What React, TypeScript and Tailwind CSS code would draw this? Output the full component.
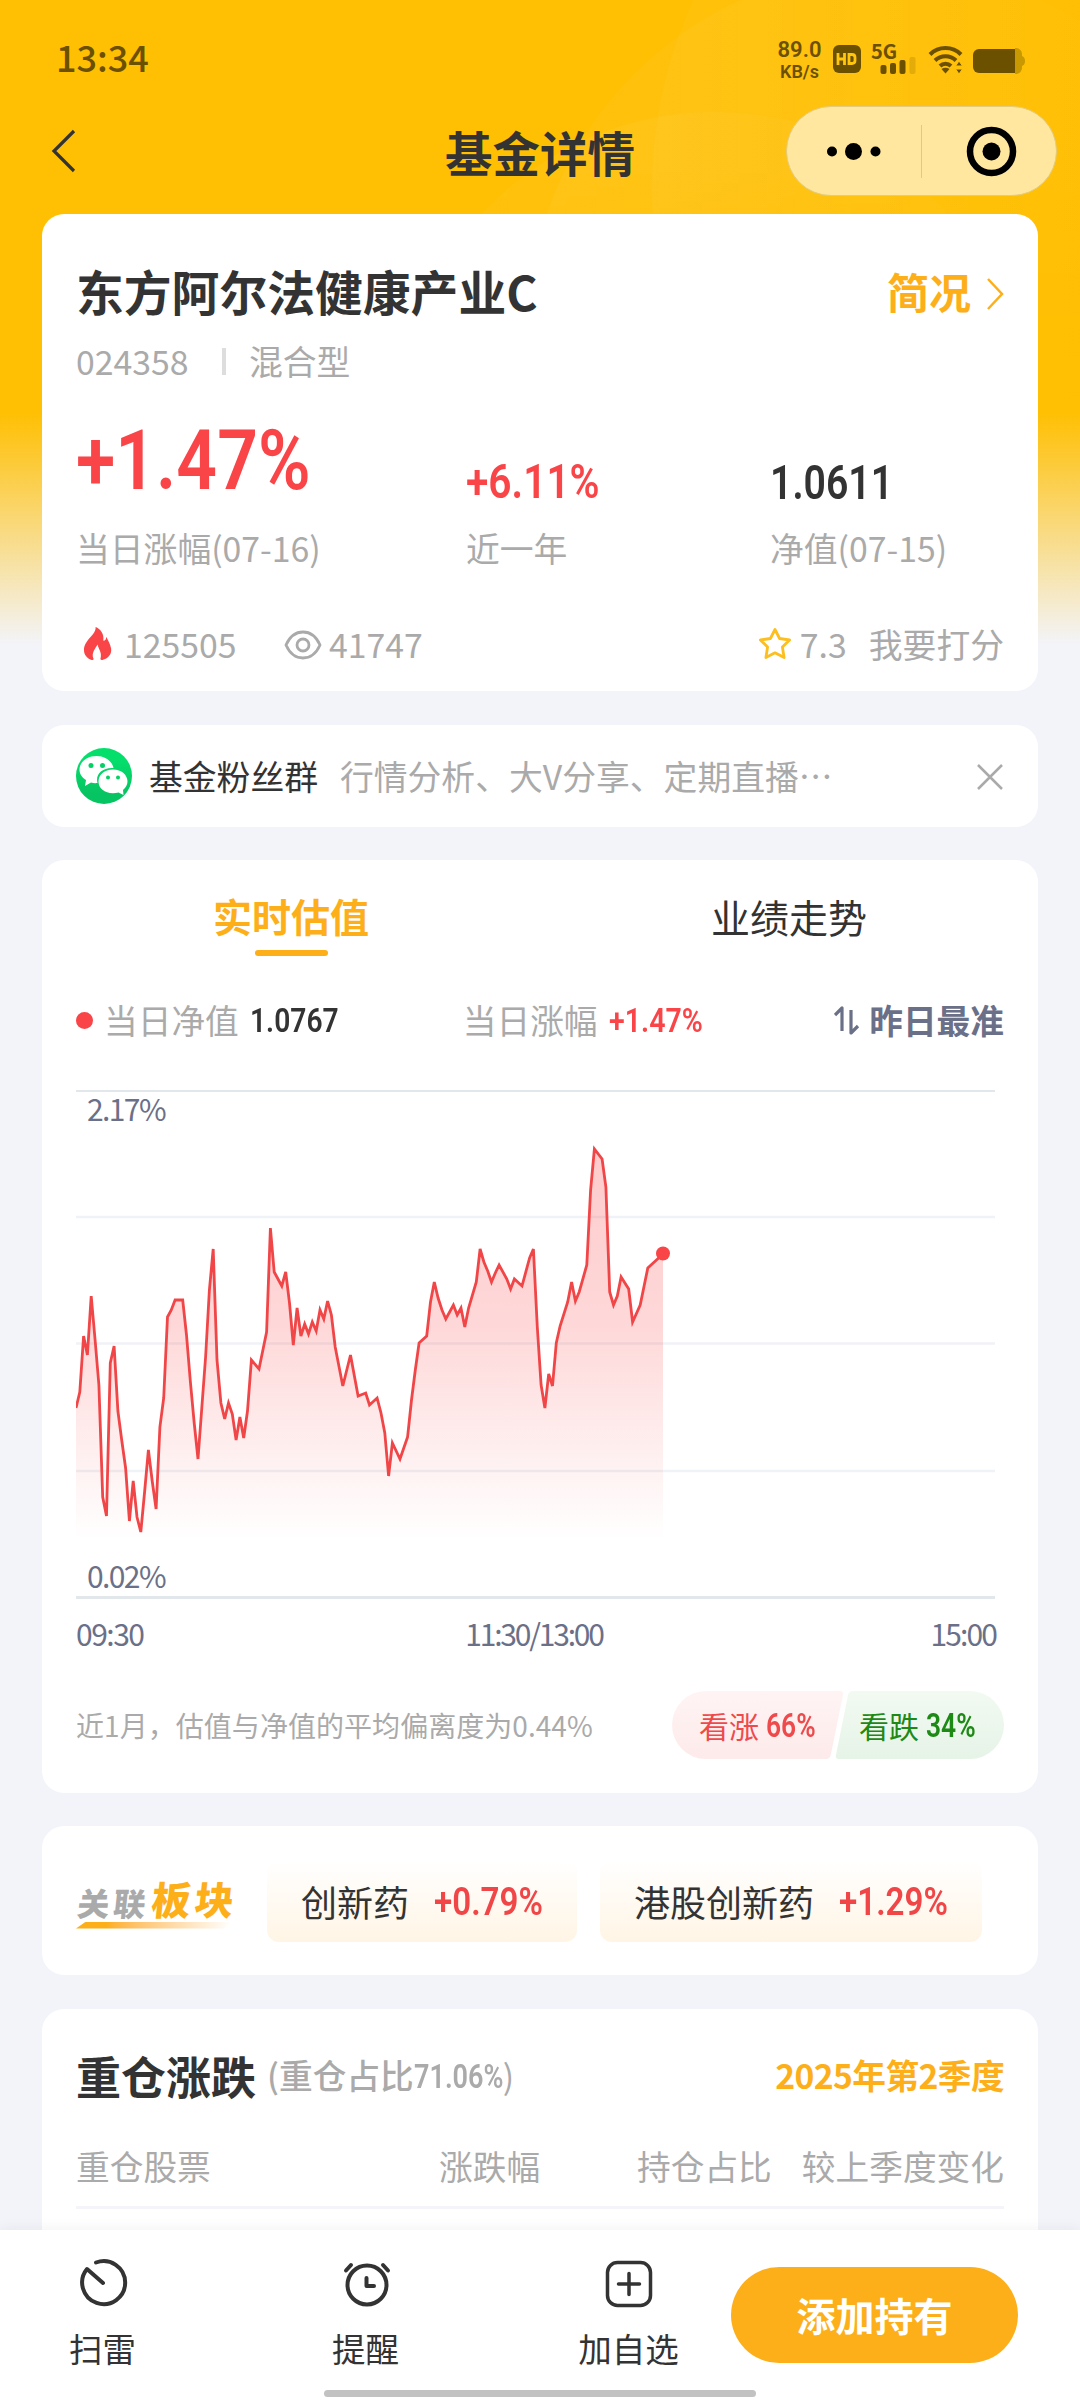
import type { ReactNode } from 'react';
import clsx from 'clsx';

// [minute since open, offset from the top grid line]
const POINTS: [number, number][] = [
  [0, 318], [1, 302], [2, 246], [3, 265], [4, 206], [5, 250], [6, 295], [7, 407], [8, 426], [9, 273],
  [10, 256], [11, 321], [12, 350], [13, 378], [14, 431], [15, 391], [16, 427], [17, 442], [18, 402], [19, 360],
  [20, 391], [21, 419], [22, 337], [23, 308], [24, 227], [25, 220], [26, 210], [28, 210], [29, 245], [30, 292],
  [31, 333], [32, 369], [33, 318], [34, 267], [35, 200], [36, 159], [37, 270], [38, 313], [39, 329], [40, 313],
  [41, 324], [42, 350], [43, 327], [44, 348], [45, 321], [46, 270], [48, 279], [50, 242], [51, 138], [52, 182],
  [54, 196], [55, 182], [56, 213], [57, 255], [58, 218], [59, 246], [60, 234], [61, 244], [62, 232], [63, 241],
  [64, 220], [65, 229], [66, 211], [67, 225], [68, 257], [70, 296], [72, 265], [74, 306], [76, 303], [77, 315],
  [79, 308], [80, 323], [81, 343], [82, 386], [83, 353], [85, 369], [87, 347], [88, 310], [89, 280], [90, 253],
  [92, 246], [93, 212], [94, 192], [95, 208], [96, 220], [97, 229], [99, 215], [100, 225], [101, 218], [102, 237],
  [103, 218], [105, 192], [106, 159], [107, 172], [108, 181], [109, 192], [110, 183], [111, 175], [113, 189], [114, 199],
  [115, 189], [117, 196], [119, 168], [120, 159], [121, 237], [122, 295], [123, 318], [124, 284], [125, 296], [126, 253],
  [127, 236], [129, 212], [130, 192], [131, 211], [132, 202], [134, 175], [135, 100], [136, 59], [138, 69], [139, 97],
  [140, 202], [141, 215], [142, 206], [143, 187], [145, 199], [146, 232], [148, 215], [150, 178], [154, 164],
];

const STEP = 3.812;
const line = POINTS.map(([m, y]) => `${(m * STEP).toFixed(1)},${y}`).join(' ');

function Card({ className, children }: { className?: string; children: ReactNode }) {
  return <section className={clsx('mx-[42px] rounded-[22px] bg-white px-[34px]', className)}>{children}</section>;
}

// Condensed figures: the outer box keeps the final width, the inner text is squeezed into it
function Num({ className, squeeze = 'scale-x-[0.83]', children }: { className?: string; squeeze?: string; children: ReactNode }) {
  return (
    <span className={clsx("inline-block shrink-0 whitespace-nowrap font-['Roboto',sans-serif] leading-none font-semibold", className)}>
      <span className={clsx('inline-block origin-left', squeeze)}>{children}</span>
    </span>
  );
}

function StatusBar() {
  return (
    <div className="flex h-[116px] items-start pt-[38px] pr-[55px] pl-[56px] text-[#6b5000]">
      <span className="text-[36px] leading-none font-medium">13:34</span>
      <div className="mt-[3px] ml-auto flex items-start">
        <div className="-mt-[3px] mr-[11px] flex w-[45px] flex-col items-center font-['Roboto',sans-serif] font-semibold whitespace-nowrap">
          <span className="text-[22px] leading-[23px]">89.0</span>
          <span className="text-[18px] leading-[21px]">KB/s</span>
        </div>
        <svg className="mt-[4px] mr-[10px] h-7 w-7" viewBox="0 0 28 28" fill="none">
          <rect width="28" height="28" rx="6" fill="#6b5000" />
          <path d="M5 8v12M11.500 8v12M5 14h6.500M16 8v12M15.500 9.500h3.500q3 0 3 3v3q0 3-3 3h-3.500" stroke="#ffc60d" strokeWidth="2.800" />
        </svg>
        <div className="mr-[11px] h-9 w-[46px]">
          <div className="h-[16px] text-[20px] leading-[20px] font-bold">5G</div>
          <svg className="ml-[9px]" width="36" height="17" viewBox="0 0 36 17" fill="#6b5000">
            <rect x="0.500" y="8" width="6" height="9" rx="2" />
            <rect x="10" y="6" width="6" height="11" rx="2" />
            <rect x="19.500" y="3" width="6" height="14" rx="2" />
            <rect x="29.500" y="0" width="6" height="17" rx="2" opacity="0.18" />
          </svg>
        </div>
        <svg className="mt-[4px] mr-[9px]" width="36" height="30" viewBox="0 0 36 30" fill="none" stroke="#6b5000" strokeWidth="4">
          <path d="M2 9.500a22 22 0 0 1 31 0M7 15.500a15 15 0 0 1 21 0M12 21a8 8 0 0 1 11 0" />
          <path d="M13.500 24q4-2.500 8 0l-4 4.500z" fill="#6b5000" stroke="none" />
          <path d="M31 16l3.500 5h-7zM31 29l3.500-5h-7z" fill="#6b5000" stroke="#ffc50a" strokeWidth="1" />
        </svg>
        <svg className="mt-[7px]" width="52" height="26" viewBox="0 0 52 26">
          <path d="M42 0h1a6 6 0 0 1 6 6v14a6 6 0 0 1-6 6h-1zM49 8q3 1 3 5t-3 5z" fill="#c89900" />
          <path d="M6 1h36v24H6a6 6 0 0 1-6-6V7a6 6 0 0 1 6-6z" fill="#6b5000" />
        </svg>
      </div>
    </div>
  );
}

function NavBar() {
  return (
    <div className="relative flex h-[98px] items-start justify-center">
      <svg className="absolute top-[12px] left-[50px]" width="28" height="46" viewBox="0 0 28 46" fill="none" stroke="#333" strokeWidth="3.200">
        <path d="M24 3L4 23l20 20" />
      </svg>
      <h1 className="mt-[12px] text-[47.500px] leading-none font-bold text-[#333]">基金详情</h1>
      <div className="absolute -top-[10px] right-[23px] flex h-[90px] w-[271px] items-center rounded-full border border-[#e3cc80] bg-[#ffe79f]">
        <svg width="268" height="88" viewBox="0 0 268 88">
          <circle cx="45" cy="44.500" r="5" />
          <circle cx="66.500" cy="44.500" r="8.500" />
          <circle cx="88.500" cy="44.500" r="5" />
          <path d="M134.500 18v53" stroke="#e0c987" strokeWidth="1" />
          <circle cx="204.500" cy="44.500" r="21.500" fill="none" stroke="#000" strokeWidth="6.500" />
          <circle cx="204.500" cy="44.500" r="9" />
        </svg>
      </div>
    </div>
  );
}

function HeaderBackdrop() {
  return (
    <div className="absolute inset-x-0 top-0 h-[650px] bg-[#f3f4fa]">
      <div className="h-full bg-[linear-gradient(to_bottom,#ffbf02_0,#ffbf02_412px,#f3f4fa_645px)]">
        <svg className="mask-b-from-40%" width="1080" height="420" viewBox="0 0 1080 420" fill="url(#glow)">
          <defs>
            <linearGradient id="glow" x1="430" y1="0" x2="1080" y2="0" gradientUnits="userSpaceOnUse">
              <stop offset="0.1" stopColor="#fff" stopOpacity="0.05" />
              <stop offset="1" stopColor="#fff" stopOpacity="0.01" />
            </linearGradient>
          </defs>
          <circle cx="890" cy="330" r="362" />
          <circle cx="715" cy="430" r="318" />
          <circle cx="1110" cy="190" r="458" />
        </svg>
      </div>
    </div>
  );
}

function SummaryCard() {
  return (
    <Card className="h-[477px] pt-[47px] text-[33.800px] leading-none text-[#aaa]">
      <div className="flex h-[60px] items-center">
        <h2 className="text-[47.800px] leading-none font-bold text-[#333]">东方阿尔法健康产业C</h2>
        <span className="ml-auto text-[42px] leading-none font-bold text-[#fdaf1a]">简况</span>
        <svg className="mt-[5px] mr-[-2px] ml-[13px]" width="22" height="34" viewBox="0 0 22 34" fill="none" stroke="#fdaf1a" strokeWidth="2.500">
          <path d="M4 2l14 15L4 32" />
        </svg>
      </div>
      <div className="mt-5 flex h-10 items-center">
        <span className="w-[146px]">024358</span>
        <span className="mr-[23px] h-[27px] w-1 bg-[#ddd]" />
        <span>混合型</span>
      </div>
      <div className="mt-[37px] flex h-[148px]">
        <div className="w-[390px]">
          <Num className="h-[84px] pt-px text-[84px] text-[#fa4548]" squeeze="scale-x-[0.85]">+1.47%</Num>
          <div className="mt-[29px] whitespace-nowrap">当日涨幅(07-16)</div>
        </div>
        <div className="w-[304px]">
          <Num className="h-[84px] pt-[39px] text-[49px] text-[#fa4548]">+6.11%</Num>
          <div className="mt-[29px]">近一年</div>
        </div>
        <div>
          <Num className="h-[84px] w-[124px] pt-[40px] text-[49px] text-[#333]" squeeze="scale-x-[0.8]">1.0611</Num>
          <div className="mt-[29px] whitespace-nowrap">净值(07-15)</div>
        </div>
      </div>
      <div className="mt-[58px] flex h-10 items-center">
        <svg className="mr-[11px] ml-[7px]" width="30" height="35" viewBox="0 0 31 36">
          <path d="M13 0C14 8 1 13 1 24c0 5 4 9 8 10 1 0 2 0 2-1-3-6 2-11 4-15 1 5 5 8 3 15 0 1 1 1 2 1 6-1 10-6 9-12C28 17 26 14 24 10c0 3-1 4-3 4C22 7 18 2 13 0z" fill="#fa4548" />
        </svg>
        <span className="w-[160px]">125505</span>
        <svg className="mt-[2px] mr-[7px]" width="38" height="30" viewBox="0 0 38 30" fill="none" stroke="#aaa" strokeWidth="2.800">
          <path d="M2 15C6 6 12 2 19 2s13 4 17 13c-4 9-10 13-17 13S6 24 2 15z" />
          <circle cx="19" cy="15" r="6" />
        </svg>
        <span>41747</span>
        <svg className="mr-[8px] ml-auto" width="34" height="34" viewBox="0 0 34 34" fill="none" stroke="#fdbf1f" strokeWidth="2.800" strokeLinejoin="round">
          <path d="M17 2.500l4.600 9 10 1.500-7.200 7.100 1.700 10.400-9.100-4.700-9.100 4.700 1.700-10.400L2.400 13l10-1.500z" />
        </svg>
        <span className="w-[69px]">7.3</span>
        <span>我要打分</span>
      </div>
    </Card>
  );
}

function FanGroupCard() {
  return (
    <Card className="mt-[34px] flex h-[102px] items-center text-[33.800px] leading-none">
      <svg className="mr-[17px] shrink-0" width="56" height="56" viewBox="0 0 56 56">
        <defs>
          <linearGradient id="wx" x1="0" y1="0" x2="0" y2="1">
            <stop offset="0.2" stopColor="#04df6c" />
            <stop offset="0.8" stopColor="#07c462" />
          </linearGradient>
        </defs>
        <circle cx="28" cy="28" r="28" fill="url(#wx)" />
        <path d="M20.500 8C11 8 3.500 14 3.500 21.500c0 4.500 2.500 8 6.500 10.500l-1 6 6-3.500c2 .6 4 .8 6.500.5C19 26 27 19 37.500 20 36 13 29 8 20.500 8z" fill="#fff" />
        <path d="M37 21.500c8.500 0 14.500 5.500 14.500 12 0 3.500-2 6.500-4.500 8.500l.5 5-5-2.500c-2 .5-3.500.7-5.500.7-8.500 0-14.500-5-14.500-11.700s6-12 14.500-12z" fill="#fff" />
        <circle cx="15" cy="17.500" r="2.500" fill="#06cf66" />
        <circle cx="26.500" cy="17.500" r="2.500" fill="#06cf66" />
        <circle cx="32" cy="29.500" r="2" fill="#06cf66" />
        <circle cx="42" cy="29.500" r="2" fill="#06cf66" />
      </svg>
      <span className="text-[#333]">基金粉丝群</span>
      <span className="ml-[22px] text-[#aaa]">行情分析、大V分享、定期直播⋯</span>
      <svg className="mt-[2px] ml-auto" width="28" height="28" viewBox="0 0 28 28" stroke="#aaa" strokeWidth="2.500">
        <path d="M2 2l24 24M26 2L2 26" />
      </svg>
    </Card>
  );
}

function Tab({ label, active }: { label: string; active?: boolean }) {
  return (
    <div className="flex w-1/2 flex-col items-center">
      <span className={clsx('text-[39px] leading-none', active ? 'font-bold text-[#fdaf1a]' : 'pt-px text-[#333]')}>{label}</span>
      {active && <span className="mt-[15px] h-[6px] w-[73px] rounded-full bg-[#fdaf1a]" />}
    </div>
  );
}

function EstimateChart() {
  return (
    <div className="relative mt-[50px] h-[510px]">
      <svg width="928" height="510" viewBox="0 0 928 510" fill="none">
        <defs>
          <linearGradient id="area" x1="0" y1="59" x2="0" y2="450" gradientUnits="userSpaceOnUse">
            <stop offset="0" stopColor="#fa4548" stopOpacity="0.28" />
            <stop offset="0.45" stopColor="#fa4548" stopOpacity="0.21" />
            <stop offset="1" stopColor="#fa4548" stopOpacity="0" />
          </linearGradient>
        </defs>
        <path d="M0 127H919M0 253.500H919M0 381H919" stroke="#eff2f6" strokeWidth="2.500" />
        <path d="M0 .500H919M0 507.500H919" stroke="#e2e7eb" strokeWidth="3" />
        <polygon points={`0,450 ${line} 587,450`} fill="url(#area)" />
        <polyline points={line} stroke="#f04648" strokeWidth="2.800" />
        <circle cx="587" cy="163.500" r="7" fill="#fa4548" />
      </svg>
      <span className="absolute top-[3px] left-[11px] text-[30px] leading-none tracking-[-1.600px]">2.17%</span>
      <span className="absolute top-[470px] left-[11px] text-[30px] leading-none tracking-[-1.600px]">0.02%</span>
    </div>
  );
}

function EstimateCard() {
  return (
    <Card className="mt-[33px] h-[933px] pt-[36px] text-[33.700px] leading-none text-[#6b7089]">
      <div className="-mx-[34px] flex h-[62px]">
        <Tab label="实时估值" active />
        <Tab label="业绩走势" />
      </div>
      <div className="mt-[42px] flex h-10 items-center text-[#aaa]">
        <span className="mr-[11px] h-[17px] w-[17px] rounded-full bg-[#fa4548]" />
        <span>当日净值</span>
        <Num className="ml-[11px] w-[213px] text-[34px] text-[#333]">1.0767</Num>
        <span>当日涨幅</span>
        <Num className="ml-[11px] w-[95px] text-[34px] text-[#fa4548]" squeeze="scale-x-[0.84]">+1.47%</Num>
        <svg className="mt-[2px] mr-[9px] ml-auto" width="26" height="32" viewBox="0 0 26 32" fill="none" stroke="#6b7089" strokeWidth="3.200">
          <path d="M1 10l7-7v23M17 5v23l7-7" strokeLinejoin="round" />
        </svg>
        <span className="font-bold text-[#6b7089]">昨日最准</span>
      </div>
      <EstimateChart />
      <div className="mt-[18px] flex h-[30px] justify-between pr-[8px] text-[30px] leading-none tracking-[-1.500px]">
        <span>09:30</span>
        <span className="mr-[6px] tracking-[-2.200px]">11:30/13:00</span>
        <span className="tracking-[-1.900px]">15:00</span>
      </div>
      <div className="mt-[43px] flex h-[68px] items-center text-[28px] text-[#aaa]">
        <span className="tracking-[0.050px]">近1月，估值与净值的平均偏离度为0.44%</span>
        <div className="relative ml-auto flex h-[68px] w-[332px] items-center text-[30px]">
          <svg className="absolute inset-0" width="332" height="68" viewBox="0 0 332 68">
            <defs>
              <linearGradient id="up" x1="0" y1="0" x2="0" y2="1">
                <stop stopColor="#fff4f4" />
                <stop offset="1" stopColor="#fdeaea" />
              </linearGradient>
              <linearGradient id="down" x1="0" y1="0" x2="0" y2="1">
                <stop stopColor="#f2faf2" />
                <stop offset="1" stopColor="#e6f3e7" />
              </linearGradient>
            </defs>
            <path d="M34 0H168q4 0 3 4L159 63q-1 5-5 5H34a34 34 0 0 1 0-68z" fill="url(#up)" />
            <path d="M181 0H298a34 34 0 0 1 0 68H167q-4 0-3-4L176 4q1-4 5-4z" fill="url(#down)" />
          </svg>
          <div className="relative ml-[27px] flex w-[160px] items-center text-[#ee4a4c]">
            看涨<Num className="ml-[7px] text-[33px]" squeeze="scale-x-[0.8]">66%</Num>
          </div>
          <div className="relative flex items-center text-[#1c8a14]">
            看跌<Num className="ml-[7px] w-[52px] text-[33px]" squeeze="scale-x-[0.8]">34%</Num>
          </div>
        </div>
      </div>
    </Card>
  );
}

function SectorChip({ name, value, className }: { name: string; value: string; className?: string }) {
  return (
    <div className={clsx('flex h-[82px] shrink-0 items-center rounded-[12px] bg-linear-to-b from-white to-[#fff5e5] pl-[34px] text-[36px] leading-none text-[#333]', className)}>
      {name}
      <Num className="mt-[3px] ml-[25px] text-[39px] text-[#f04648]" squeeze="scale-x-[0.85]">{value}</Num>
    </div>
  );
}

function SectorCard() {
  return (
    <Card className="mt-[33px] flex h-[149px] items-center">
      <div className="w-[191px] shrink-0">
        <div className="flex origin-bottom -skew-x-6 items-end pt-[6px] leading-none font-black whitespace-nowrap">
          <span className="w-[74px] text-[32px] tracking-[4px] text-[#aaa]">关联</span>
          <span className="text-[39px] tracking-[4px] text-[#fdaf1a]">板块</span>
        </div>
        <div className="mt-[4px] h-[7px] w-[156px] bg-linear-to-r from-[#fdaf1a] from-20% to-white [clip-path:polygon(10px_0,100%_0,148px_100%,0_100%)]" />
      </div>
      <SectorChip name="创新药" value="+0.79%" className="w-[310px]" />
      <SectorChip name="港股创新药" value="+1.29%" className="ml-[23px] w-[382px]" />
    </Card>
  );
}

function HoldingsCard() {
  return (
    <Card className="mt-[34px] h-[260px] pt-[37px] text-[33.700px] leading-none text-[#aaa]">
      <div className="flex h-[58px] items-center">
        <h2 className="text-[45px] leading-none font-bold text-[#333]">重仓涨跌</h2>
        <span className="ml-[11px] font-medium">(重仓占比</span>
        <Num className="mt-[2px] w-[89px] text-[33px]" squeeze="scale-x-[0.82]">71.06%</Num>
        <span>)</span>
        <span className="ml-auto font-bold tracking-[-0.600px] text-[#fdaf1a]">2025年第2季度</span>
      </div>
      <div className="mt-[42px] flex h-[63px] items-start border-b-[3px] border-[#f4f5fa] pt-[3px] whitespace-nowrap">
        <span className="w-[363px]">重仓股票</span>
        <span className="w-[198px]">涨跌幅</span>
        <span>持仓占比</span>
        <span className="ml-auto">较上季度变化</span>
      </div>
    </Card>
  );
}

function ActionItem({ label, className, children }: { label: string; className?: string; children: ReactNode }) {
  return (
    <div className={clsx('flex shrink-0 flex-col items-center', className)}>
      <svg width="52" height="52" viewBox="0 0 52 52" fill="none" stroke="#333" strokeWidth="4" strokeLinecap="round" strokeLinejoin="round">
        {children}
      </svg>
      <span className="mt-[22px] text-[33.500px] leading-none text-[#333]">{label}</span>
    </div>
  );
}

function ActionBar() {
  return (
    <div className="absolute inset-x-0 bottom-0 h-[170px] bg-white shadow-[0_-2px_12px_rgba(0,0,0,0.05)]">
      <div className="flex pt-[27px]">
        <ActionItem label="扫雷" className="w-[205px]">
          <path d="M19 5.500A21.500 21.500 0 1 1 10 12L26 26" />
        </ActionItem>
        <ActionItem label="提醒" className="w-[321px]">
          <circle cx="27" cy="28" r="19.500" />
          <path d="M6 13.500l5-5.500M48 13.500L43 8M26.500 21v8h7.500" />
        </ActionItem>
        <ActionItem label="加自选" className="w-[205px]">
          <rect x="4.500" y="5.500" width="43" height="43" rx="10" strokeWidth="3.500" />
          <path d="M26 16.500v21M15.500 27h21" strokeWidth="3.500" />
        </ActionItem>
        <button className="mt-[10px] h-[96px] w-[287px] rounded-full bg-[#fdaf1a] pb-[2px] text-[39px] leading-none font-bold text-white">添加持有</button>
      </div>
      <div className="absolute bottom-[3px] left-1/2 h-[7px] w-[432px] -translate-x-1/2 rounded-full bg-[#c2c2c2]" />
    </div>
  );
}

export default function App() {
  return (
    <div className="relative h-[2400px] w-[1080px] overflow-hidden bg-[#f3f4fa] font-['Noto_Sans_CJK_SC',sans-serif]">
      <HeaderBackdrop />
      <div className="relative">
        <StatusBar />
        <NavBar />
        <SummaryCard />
        <FanGroupCard />
        <EstimateCard />
        <SectorCard />
        <HoldingsCard />
      </div>
      <ActionBar />
    </div>
  );
}
